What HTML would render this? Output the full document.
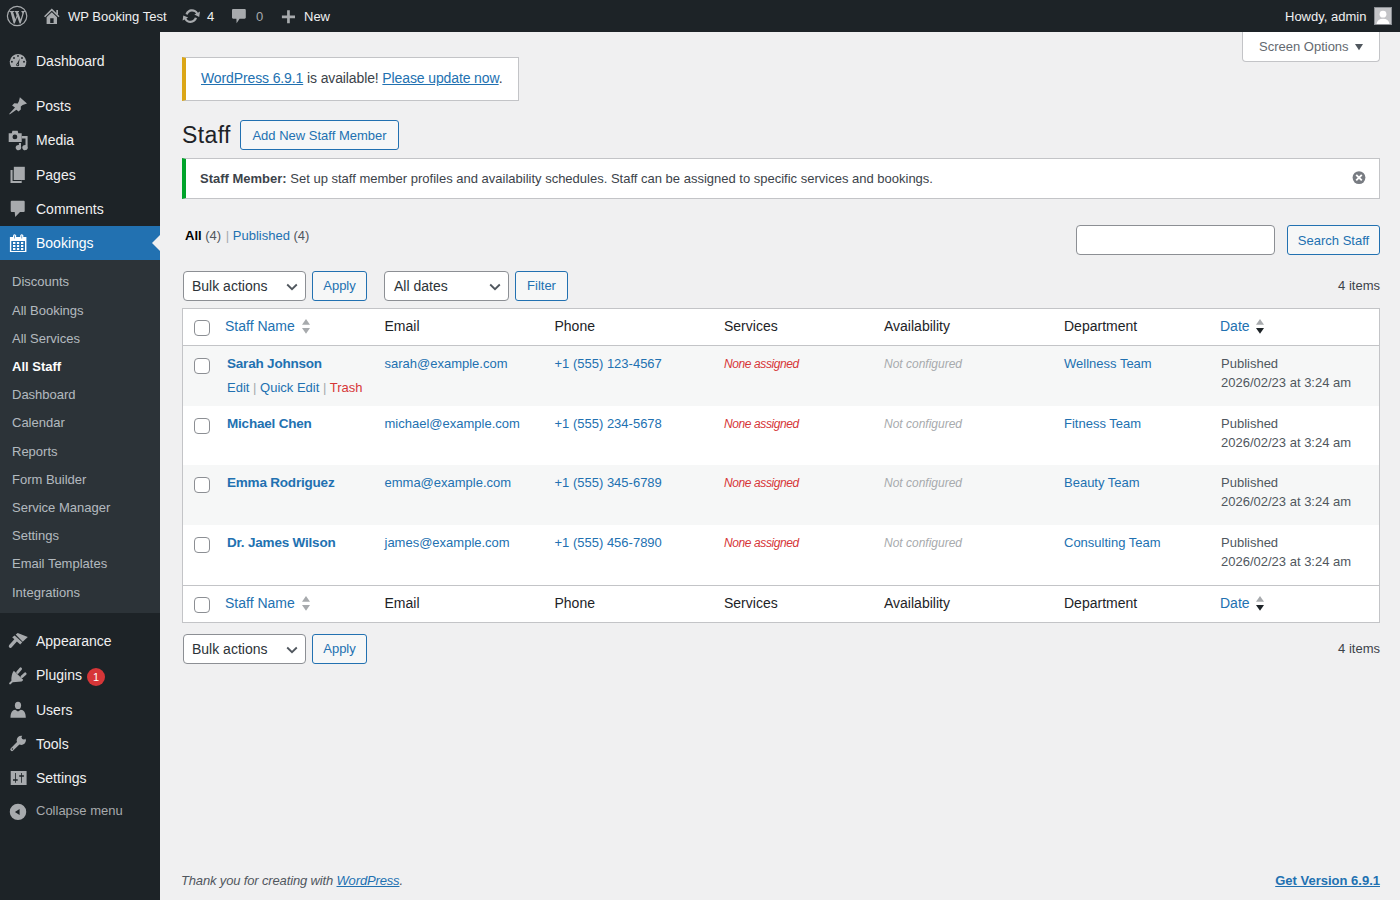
<!DOCTYPE html>
<html><head><meta charset="utf-8">
<style>
*{box-sizing:border-box}
html,body{margin:0;padding:0}
body{width:1400px;height:900px;overflow:hidden;background:#f0f0f1;font-family:"Liberation Sans",sans-serif;font-size:13px;color:#3c434a;position:relative}
a{color:#2271b1;text-decoration:none}
.abs{position:absolute}
/* admin bar */
#adminbar{position:absolute;left:0;top:0;width:1400px;height:32px;background:#1d2327;color:#f0f0f1;font-size:13px}
#adminbar .it{position:absolute;top:1px;height:32px;line-height:32px;white-space:nowrap;color:#f0f0f1}
#adminbar svg{position:absolute}
/* admin menu */
#menu{position:absolute;left:0;top:32px;width:160px;height:868px;background:#1d2327}
.mi{position:absolute;left:0;width:160px;height:34px;color:#f0f0f1;font-size:14px;line-height:18px}
.mi .t{position:absolute;left:36px;top:8px;white-space:nowrap}
.mi svg{position:absolute;left:8px;top:7px;width:20px;height:20px;fill:#a7aaad}
.mi.cur{background:#2271b1;color:#fff}
.mi.cur svg{fill:#fff}
#sub{position:absolute;left:0;top:228px;width:160px;height:353px;background:#2c3338}
.si{position:absolute;left:12px;font-size:13px;line-height:18px;color:rgba(240,246,252,.7);white-space:nowrap}
.bub{position:absolute;left:51px;top:2px;width:18px;height:18px;border-radius:9px;background:#d63638;color:#fff;font-size:11px;line-height:18px;text-align:center}
.si.cur{color:#fff;font-weight:bold}
/* content */
.btn2{position:absolute;border:1px solid #2271b1;border-radius:3px;background:#f6f7f7;color:#2271b1;font-size:13px;text-align:center;white-space:nowrap}
.sel{position:absolute;border:1px solid #8c8f94;border-radius:4px;background:#fff;color:#2c3338;font-size:14px;white-space:nowrap}
.sel svg{position:absolute;right:7px;top:9px}
.cb{position:absolute;width:16px;height:16px;border:1px solid #8c8f94;border-radius:4px;background:#fff}
th,td{padding:0}
.col{position:absolute;white-space:nowrap}
.tx{position:absolute;line-height:20px;white-space:nowrap}
.box{position:absolute;background:#fff;border:1px solid #c3c4c7}
a.u{text-decoration:underline}
.sep{color:#a7aaad}
</style></head>
<body>
<div id="adminbar">
<svg style="left:0;top:0" width="64" height="32" viewBox="0 0 64 32"><circle cx="17.1" cy="16" r="9.7" fill="none" stroke="#a7aaad" stroke-width="1.2"/><path fill="#a7aaad" d="M9.3 11 H14 V12 H13.1 L15.4 19.2 L16.6 15.6 L15.4 12 H14.6 V11 H19 V12 H18.1 L20.6 19.4 L22.1 14.8 C22.6 13.2 22.2 12.2 21.4 12 V11 H24.9 V12 H24.2 L20.7 23.6 H19.6 L17.2 16.8 L14.8 23.6 H13.6 L10.5 12 H9.3 Z"/>
<path d="M44.6 16.8 L51.8 9.6 L59 16.8" fill="none" stroke="#a7aaad" stroke-width="1.5"/><rect x="56.3" y="10" width="1.7" height="4.5" fill="#a7aaad"/><path fill-rule="evenodd" fill="#a7aaad" d="M46.6 17.2 L51.8 12.2 L57 17.2 V24 H46.6 Z M50.2 18.2 V22.9 H53.6 V18.2 Z"/></svg>
<div class="it" style="left:68px">WP Booking Test</div>
<svg style="left:180px;top:6px" width="22" height="20" viewBox="0 0 22 20"><path fill="#a7aaad" d="M11 3.2 C13.6 3.2 15.8 4.6 16.9 6.7 L19 5.6 L18.2 11 L13.3 8.6 L15.1 7.7 C14.3 6.3 12.8 5.4 11 5.4 C8.9 5.4 7.2 6.8 6.7 8.7 L4.5 8.1 C5.2 5.3 7.8 3.2 11 3.2 Z M2.3 9.6 L7.2 11.4 L5.4 12.4 C6.2 13.8 7.7 14.7 9.5 14.7 C11.6 14.7 13.3 13.3 13.8 11.4 L16 12 C15.3 14.8 12.7 16.9 9.5 16.9 C6.9 16.9 4.7 15.5 3.6 13.4 L1.6 14.6 Z" transform="translate(1 0)"/></svg>
<div class="it" style="left:207px">4</div>
<svg style="left:231px;top:8px" width="16" height="17" viewBox="0 0 16 17"><path fill="#a7aaad" d="M2.2 1 H13.6 C14.3 1 14.8 1.5 14.8 2.2 V9.6 C14.8 10.3 14.3 10.8 13.6 10.8 H8.6 L5.6 15.2 L5.4 10.8 H2.2 C1.5 10.8 1 10.3 1 9.6 V2.2 C1 1.5 1.5 1 2.2 1 Z"/></svg>
<div class="it" style="left:256px;color:#a7aaad">0</div>
<svg style="left:281px;top:10px" width="15" height="14" viewBox="0 0 15 14"><path fill="#a7aaad" d="M6.1 0.3 H8.8 V5.6 H14 V8.3 H8.8 V13.3 H6.1 V8.3 H0.9 V5.6 H6.1 Z"/></svg>
<div class="it" style="left:304px">New</div>
<div class="it" style="left:1285px">Howdy, admin</div>
<svg style="left:1374px;top:7px" width="18" height="18" viewBox="0 0 18 18"><rect x="0" y="0" width="18" height="18" fill="#c3c4c7"/><rect x="0.5" y="0.5" width="17" height="17" fill="none" stroke="#8c8f94" stroke-width="1"/><circle cx="9" cy="7.2" r="3.4" fill="#fff"/><path fill="#fff" d="M2.5 17 C3 13.5 5.5 11.8 9 11.8 C12.5 11.8 15 13.5 15.5 17 Z"/></svg>
</div>
<div id="menu">
<div class="mi cur" style="top:194px"><div class="t">Bookings</div></div>
<div style="position:absolute;left:152px;top:203px;width:0;height:0;border-top:8px solid transparent;border-bottom:8px solid transparent;border-right:8px solid #f0f0f1"></div>
<div class="mi" style="top:12px"><div class="t">Dashboard</div></div>
<div class="mi" style="top:57px"><div class="t">Posts</div></div>
<div class="mi" style="top:91px"><div class="t">Media</div></div>
<div class="mi" style="top:125.6px"><div class="t">Pages</div></div>
<div class="mi" style="top:160px"><div class="t">Comments</div></div>
<div class="mi" style="top:592px"><div class="t">Appearance</div></div>
<div class="mi" style="top:626px"><div class="t">Plugins<span class="bub">1</span></div></div>
<div class="mi" style="top:661px"><div class="t">Users</div></div>
<div class="mi" style="top:695px"><div class="t">Tools</div></div>
<div class="mi" style="top:729px"><div class="t">Settings</div></div>
<div id="sub">
<div class="si" style="top:13.40px">Discounts</div>
<div class="si" style="top:41.60px">All Bookings</div>
<div class="si" style="top:69.80px">All Services</div>
<div class="si cur" style="top:98.00px">All Staff</div>
<div class="si" style="top:126.20px">Dashboard</div>
<div class="si" style="top:154.40px">Calendar</div>
<div class="si" style="top:182.60px">Reports</div>
<div class="si" style="top:210.80px">Form Builder</div>
<div class="si" style="top:239.00px">Service Manager</div>
<div class="si" style="top:267.20px">Settings</div>
<div class="si" style="top:295.40px">Email Templates</div>
<div class="si" style="top:323.60px">Integrations</div>
</div>
<div class="si" style="left:36px;top:770.40px;color:#a7aaad">Collapse menu</div>
<svg style="position:absolute;left:0;top:-32px" width="160" height="900" viewBox="0 0 160 900">
<g fill="#a7aaad">
<!-- dashboard -->
<path d="M11.2 67 A8.3 8.3 0 1 1 24.9 67 Z"/>
<!-- posts pin -->
<path d="M19.9 97.3 L27 103.5 L22.7 105.1 L20.8 106.6 L20.8 109.4 L18.6 111.6 L16.4 109.7 L9.6 114.4 L9.3 113.8 L15 107.6 L12.1 105.4 L14.3 103.2 L17.7 103.5 L18.9 101.3 Z"/>
<!-- media -->
<path d="M8.7 133.2 H11.8 L12.4 130.7 H17.7 L18.3 133.2 H21.7 V142 H8.7 Z"/>
<path d="M18.9 143 H21 V146.5 A2.8 2.6 0 1 1 18.9 145 Z"/>
<path d="M21.7 136 H27.6 V146.5 A2.8 2.6 0 1 1 25.5 145 V138.4 H21.7 Z"/>
<!-- pages -->
<path d="M10.5 170 H13.6 V180 H21.7 V183 H10.5 Z"/>
<rect x="13.6" y="166.8" width="11.2" height="13.2"/>
<!-- comments -->
<path d="M11.7 200.8 H23.7 Q24.7 200.8 24.7 201.8 V211 Q24.7 212 23.7 212 H20 L15.2 217 L14.7 212 H11.7 Q10.7 212 10.7 211 V201.8 Q10.7 200.8 11.7 200.8 Z"/>
<!-- appearance -->
<path d="M12.2 637.3 L14.6 635.6 L22.2 642.2 L20.2 644.6 Z"/>
<path d="M15.7 634.5 L17.7 633.0 L27.8 637.0 L22.7 641.7 Z"/>
<path d="M15.6 640.3 L10.5 646.1" stroke="#a7aaad" stroke-width="3.4" stroke-linecap="round"/>
<!-- plugins -->
<path d="M13.8 670.8 L23.2 679.8 Q22.8 681 21.6 681.4 L12.7 682.3 L10.9 684.1 Q10 684.8 9.3 684 Q8.8 683.2 9.6 682.4 L11.4 680.7 Q11.1 674.6 13.8 670.8 Z"/>
<path d="M17.6 672.4 L20.6 668.8 M21.9 676.7 L25.2 673.8" stroke="#a7aaad" stroke-width="2.8" stroke-linecap="round" fill="none"/>
<!-- users -->
<ellipse cx="18" cy="705.4" rx="3.1" ry="3.7"/>
<path d="M10.5 717.8 C10.5 712.5 12.5 709.8 15.2 709.8 L18 711.6 L20.8 709.8 C23.7 709.8 25.8 712.5 25.8 717.8 Z"/>
<!-- tools -->
<path d="M19.2 742.3 L12 749.4" stroke="#a7aaad" stroke-width="3.4" stroke-linecap="round"/>
<circle cx="21.3" cy="740.3" r="4.6"/><circle cx="23.9" cy="737.2" r="2.3" fill="#1d2327"/>
<!-- settings -->
<path fill-rule="evenodd" d="M10.7 771 H26.6 V785 H10.7 Z M15.1 773 V779.2 H13 V780.8 H15.1 V782.7 H15.9 V780.8 H17.7 V779.2 H15.9 V773 Z M21.2 773 V775.2 H19.2 V776.8 H21.2 V782.7 H22 V776.8 H23.9 V775.2 H22 V773 Z"/>
<!-- collapse -->
<path fill-rule="evenodd" d="M18 803.7 A8.2 8.2 0 1 1 18 820.1 A8.2 8.2 0 1 1 18 803.7 Z M14.9 811.9 L19.6 809.1 V815 Z"/>
</g>
<g fill="#1d2327">
<circle cx="18" cy="55.9" r="0.95"/><circle cx="14" cy="58" r="0.95"/><circle cx="22" cy="58" r="0.95"/><circle cx="11.9" cy="61.8" r="0.95"/><circle cx="24" cy="61.8" r="0.95"/>
<path d="M16.7 64.3 L19.8 58.6 L18.6 65 Z"/><circle cx="17.7" cy="64.7" r="1.5"/>
<circle cx="14.9" cy="136.9" r="2.4"/>
<path d="M12.6 180 H21.7 V181 H12.6 Z M12.6 166 H13.6 V180 H12.6 Z"/>
<circle cx="12.4" cy="749.0" r="0.7"/>
</g>
<circle cx="17.7" cy="64.7" r="0.6" fill="#a7aaad"/>
<g fill="#fff">
<path fill-rule="evenodd" d="M9.9 236.9 H26.4 V252 H9.9 Z M11.3 240.9 V250.9 H25 V240.9 Z"/>
<rect x="13" y="242" width="2.4" height="2"/><rect x="16.9" y="242" width="2.3" height="2"/><rect x="21" y="242" width="2.3" height="2"/>
<rect x="13" y="245" width="2.4" height="2"/><rect x="16.9" y="245" width="2.3" height="2"/><rect x="21" y="245" width="2.3" height="2"/>
<rect x="13" y="248" width="2.4" height="2"/><rect x="16.9" y="248" width="2.3" height="2"/><rect x="21" y="248" width="2.3" height="2"/>
<path d="M13 238.6 V235.5 Q14.55 233.2 16.1 235.5 V238.6 Z"/><path d="M20.2 238.6 V235.5 Q21.75 233.2 23.3 235.5 V238.6 Z"/>
</g>
<g fill="#2271b1"><rect x="14.3" y="235.5" width="0.6" height="3"/><rect x="21.5" y="235.5" width="0.6" height="3"/></g>
</svg>
</div>
<div class="box" style="left:1242px;top:32px;width:138px;height:30px;border-top:none;border-radius:0 0 4px 4px"></div>
<div class="tx " style="left:1259px;top:37px;font-size:13px;color:#646970">Screen Options</div>
<svg class="abs" style="left:1354px;top:43px" width="10" height="9" viewBox="0 0 10 9"><path d="M1 1 H9 L5 7.2 Z" fill="#50575e"/></svg>
<div class="box" style="left:182px;top:57px;width:337px;height:44px;border-left:4px solid #dba617"></div>
<div class="tx " style="left:201px;top:68px;font-size:14px;color:#3c434a;letter-spacing:-0.12px"><a class="u" href="#">WordPress 6.9.1</a> is available! <a class="u" href="#">Please update now</a>.</div>
<div class="tx" style="left:182px;top:120px;font-size:23px;line-height:30px;color:#1d2327;letter-spacing:0.4px">Staff</div>
<div class="btn2" style="left:240px;top:120px;width:159px;height:30px;line-height:29px">Add New Staff Member</div>
<div class="box" style="left:182px;top:158px;width:1198px;height:41px;border-left:4px solid #00a32a"></div>
<div class="tx " style="left:200px;top:169px;font-size:13px;color:#3c434a"><b>Staff Member:</b> Set up staff member profiles and availability schedules. Staff can be assigned to specific services and bookings.</div>
<svg class="abs" style="left:1351px;top:170px" width="16" height="16" viewBox="0 0 16 16"><circle cx="8" cy="7.6" r="6.4" fill="#787c82"/><path d="M5.2 4.8 L10.8 10.4 M10.8 4.8 L5.2 10.4" stroke="#fff" stroke-width="1.9"/></svg>
<div class="tx " style="left:185px;top:226px;font-size:13px;color:#50575e"><b style="color:#000">All</b> (4) <span style="margin:0 0 0 1px;color:#a7aaad">|</span> <a href="#">Published <span style="color:#50575e">(4)</span></a></div>
<div class="box" style="left:1076px;top:225px;width:199px;height:30px;border-color:#8c8f94;border-radius:4px"></div>
<div class="btn2" style="left:1287px;top:225px;width:93px;height:30px;line-height:29px">Search Staff</div>
<div class="sel" style="left:183px;top:271px;width:123px;height:30px"></div>
<div class="tx " style="left:192px;top:275.5px;font-size:14px;color:#2c3338">Bulk actions</div>
<svg class="abs" style="left:286px;top:283px" width="12" height="8" viewBox="0 0 12 8"><path d="M1.2 1.5 L6 6.2 L10.8 1.5" fill="none" stroke="#50575e" stroke-width="1.8"/></svg>
<div class="btn2" style="left:312px;top:271px;width:55px;height:30px;line-height:28px">Apply</div>
<div class="sel" style="left:384px;top:271px;width:125px;height:30px"></div>
<div class="tx " style="left:394px;top:275.5px;font-size:14px;color:#2c3338">All dates</div>
<svg class="abs" style="left:489px;top:283px" width="12" height="8" viewBox="0 0 12 8"><path d="M1.2 1.5 L6 6.2 L10.8 1.5" fill="none" stroke="#50575e" stroke-width="1.8"/></svg>
<div class="btn2" style="left:515px;top:271px;width:53px;height:30px;line-height:28px">Filter</div>
<div class="tx " style="right:20px;top:276px;font-size:13px;color:#3c434a">4 items</div>
<div class="box" style="left:182px;top:308px;width:1198px;height:315px;background:#fff"></div>
<div class="abs" style="left:183px;top:345px;width:1196px;height:1px;background:#c3c4c7"></div>
<div class="abs" style="left:183px;top:585px;width:1196px;height:1px;background:#c3c4c7"></div>
<div class="abs" style="left:183px;top:346px;width:1196px;height:60px;background:#f6f7f7"></div>
<div class="abs" style="left:183px;top:465px;width:1196px;height:60px;background:#f6f7f7"></div>
<div class="cb" style="left:194px;top:320px"></div>
<div class="tx " style="left:225px;top:316px;font-size:14px;color:#2271b1"><a href="#">Staff Name</a></div>
<svg class="abs" style="left:301px;top:319px" width="10" height="16" viewBox="0 0 10 16"><path d="M1 5.8 L5 0 L9 5.8 Z M1 9 H9 L5 14.8 Z" fill="#a7aaad"/></svg>
<div class="tx " style="left:384.5px;top:316px;font-size:14px;color:#1d2327">Email</div>
<div class="tx " style="left:554.5px;top:316px;font-size:14px;color:#1d2327">Phone</div>
<div class="tx " style="left:724px;top:316px;font-size:14px;color:#1d2327">Services</div>
<div class="tx " style="left:884px;top:316px;font-size:14px;color:#1d2327">Availability</div>
<div class="tx " style="left:1064px;top:316px;font-size:14px;color:#1d2327">Department</div>
<div class="tx " style="left:1220px;top:316px;font-size:14px;color:#2271b1"><a href="#">Date</a></div>
<svg class="abs" style="left:1255px;top:319px" width="10" height="16" viewBox="0 0 10 16"><path d="M1 5.8 L5 0 L9 5.8 Z" fill="#a7aaad"/><path d="M1 9 H9 L5 14.8 Z" fill="#1d2327"/></svg>
<div class="cb" style="left:194px;top:358px"></div>
<div class="tx " style="left:227px;top:354px;font-size:13px;font-weight:bold;color:#2271b1;font-size:13.5px;letter-spacing:-0.2px"><a href="#">Sarah Johnson</a></div>
<div class="tx " style="left:227px;top:378px;font-size:13px;color:#a7aaad"><a href="#">Edit</a> <span class="sep">|</span> <a href="#">Quick Edit</a> <span class="sep">|</span> <a href="#" style="color:#d63638">Trash</a></div>
<div class="tx " style="left:384.5px;top:354px;font-size:13px;"><a href="#">sarah@example.com</a></div>
<div class="tx " style="left:554.5px;top:354px;font-size:13px;"><a href="#">+1 (555) 123-4567</a></div>
<div class="tx " style="left:724px;top:354px;font-size:12px;font-style:italic;color:#d63638;letter-spacing:-0.4px">None assigned</div>
<div class="tx " style="left:884px;top:354px;font-size:12px;font-style:italic;color:#a7aaad">Not configured</div>
<div class="tx " style="left:1064px;top:354px;font-size:13px;"><a href="#">Wellness Team</a></div>
<div class="tx " style="left:1221px;top:354px;font-size:13px;color:#50575e">Published</div>
<div class="tx " style="left:1221px;top:373.0px;font-size:13px;color:#50575e">2026/02/23 at 3:24 am</div>
<div class="cb" style="left:194px;top:418px"></div>
<div class="tx " style="left:227px;top:413.8px;font-size:13px;font-weight:bold;color:#2271b1;font-size:13.5px;letter-spacing:-0.2px"><a href="#">Michael Chen</a></div>
<div class="tx " style="left:384.5px;top:413.8px;font-size:13px;"><a href="#">michael@example.com</a></div>
<div class="tx " style="left:554.5px;top:413.8px;font-size:13px;"><a href="#">+1 (555) 234-5678</a></div>
<div class="tx " style="left:724px;top:413.8px;font-size:12px;font-style:italic;color:#d63638;letter-spacing:-0.4px">None assigned</div>
<div class="tx " style="left:884px;top:413.8px;font-size:12px;font-style:italic;color:#a7aaad">Not configured</div>
<div class="tx " style="left:1064px;top:413.8px;font-size:13px;"><a href="#">Fitness Team</a></div>
<div class="tx " style="left:1221px;top:413.8px;font-size:13px;color:#50575e">Published</div>
<div class="tx " style="left:1221px;top:432.8px;font-size:13px;color:#50575e">2026/02/23 at 3:24 am</div>
<div class="cb" style="left:194px;top:477px"></div>
<div class="tx " style="left:227px;top:473.2px;font-size:13px;font-weight:bold;color:#2271b1;font-size:13.5px;letter-spacing:-0.2px"><a href="#">Emma Rodriguez</a></div>
<div class="tx " style="left:384.5px;top:473.2px;font-size:13px;"><a href="#">emma@example.com</a></div>
<div class="tx " style="left:554.5px;top:473.2px;font-size:13px;"><a href="#">+1 (555) 345-6789</a></div>
<div class="tx " style="left:724px;top:473.2px;font-size:12px;font-style:italic;color:#d63638;letter-spacing:-0.4px">None assigned</div>
<div class="tx " style="left:884px;top:473.2px;font-size:12px;font-style:italic;color:#a7aaad">Not configured</div>
<div class="tx " style="left:1064px;top:473.2px;font-size:13px;"><a href="#">Beauty Team</a></div>
<div class="tx " style="left:1221px;top:473.2px;font-size:13px;color:#50575e">Published</div>
<div class="tx " style="left:1221px;top:492.2px;font-size:13px;color:#50575e">2026/02/23 at 3:24 am</div>
<div class="cb" style="left:194px;top:537px"></div>
<div class="tx " style="left:227px;top:532.8px;font-size:13px;font-weight:bold;color:#2271b1;font-size:13.5px;letter-spacing:-0.2px"><a href="#">Dr. James Wilson</a></div>
<div class="tx " style="left:384.5px;top:532.8px;font-size:13px;"><a href="#">james@example.com</a></div>
<div class="tx " style="left:554.5px;top:532.8px;font-size:13px;"><a href="#">+1 (555) 456-7890</a></div>
<div class="tx " style="left:724px;top:532.8px;font-size:12px;font-style:italic;color:#d63638;letter-spacing:-0.4px">None assigned</div>
<div class="tx " style="left:884px;top:532.8px;font-size:12px;font-style:italic;color:#a7aaad">Not configured</div>
<div class="tx " style="left:1064px;top:532.8px;font-size:13px;"><a href="#">Consulting Team</a></div>
<div class="tx " style="left:1221px;top:532.8px;font-size:13px;color:#50575e">Published</div>
<div class="tx " style="left:1221px;top:551.8px;font-size:13px;color:#50575e">2026/02/23 at 3:24 am</div>
<div class="cb" style="left:194px;top:597px"></div>
<div class="tx " style="left:225px;top:593px;font-size:14px;color:#2271b1"><a href="#">Staff Name</a></div>
<svg class="abs" style="left:301px;top:596px" width="10" height="16" viewBox="0 0 10 16"><path d="M1 5.8 L5 0 L9 5.8 Z M1 9 H9 L5 14.8 Z" fill="#a7aaad"/></svg>
<div class="tx " style="left:384.5px;top:593px;font-size:14px;color:#1d2327">Email</div>
<div class="tx " style="left:554.5px;top:593px;font-size:14px;color:#1d2327">Phone</div>
<div class="tx " style="left:724px;top:593px;font-size:14px;color:#1d2327">Services</div>
<div class="tx " style="left:884px;top:593px;font-size:14px;color:#1d2327">Availability</div>
<div class="tx " style="left:1064px;top:593px;font-size:14px;color:#1d2327">Department</div>
<div class="tx " style="left:1220px;top:593px;font-size:14px;color:#2271b1"><a href="#">Date</a></div>
<svg class="abs" style="left:1255px;top:596px" width="10" height="16" viewBox="0 0 10 16"><path d="M1 5.8 L5 0 L9 5.8 Z" fill="#a7aaad"/><path d="M1 9 H9 L5 14.8 Z" fill="#1d2327"/></svg>
<div class="sel" style="left:183px;top:634px;width:123px;height:30px"></div>
<div class="tx " style="left:192px;top:638.5px;font-size:14px;color:#2c3338">Bulk actions</div>
<svg class="abs" style="left:286px;top:646px" width="12" height="8" viewBox="0 0 12 8"><path d="M1.2 1.5 L6 6.2 L10.8 1.5" fill="none" stroke="#50575e" stroke-width="1.8"/></svg>
<div class="btn2" style="left:312px;top:634px;width:55px;height:30px;line-height:28px">Apply</div>
<div class="tx " style="right:20px;top:639px;font-size:13px;color:#3c434a">4 items</div>
<div class="tx " style="left:181px;top:871px;font-size:13px;font-style:italic;color:#50575e;letter-spacing:-0.15px">Thank you for creating with <a class="u" href="#">WordPress</a>.</div>
<div class="tx " style="right:20px;top:871px;font-size:13px;"><a class="u" href="#" style="font-weight:bold">Get Version 6.9.1</a></div>
</body></html>
